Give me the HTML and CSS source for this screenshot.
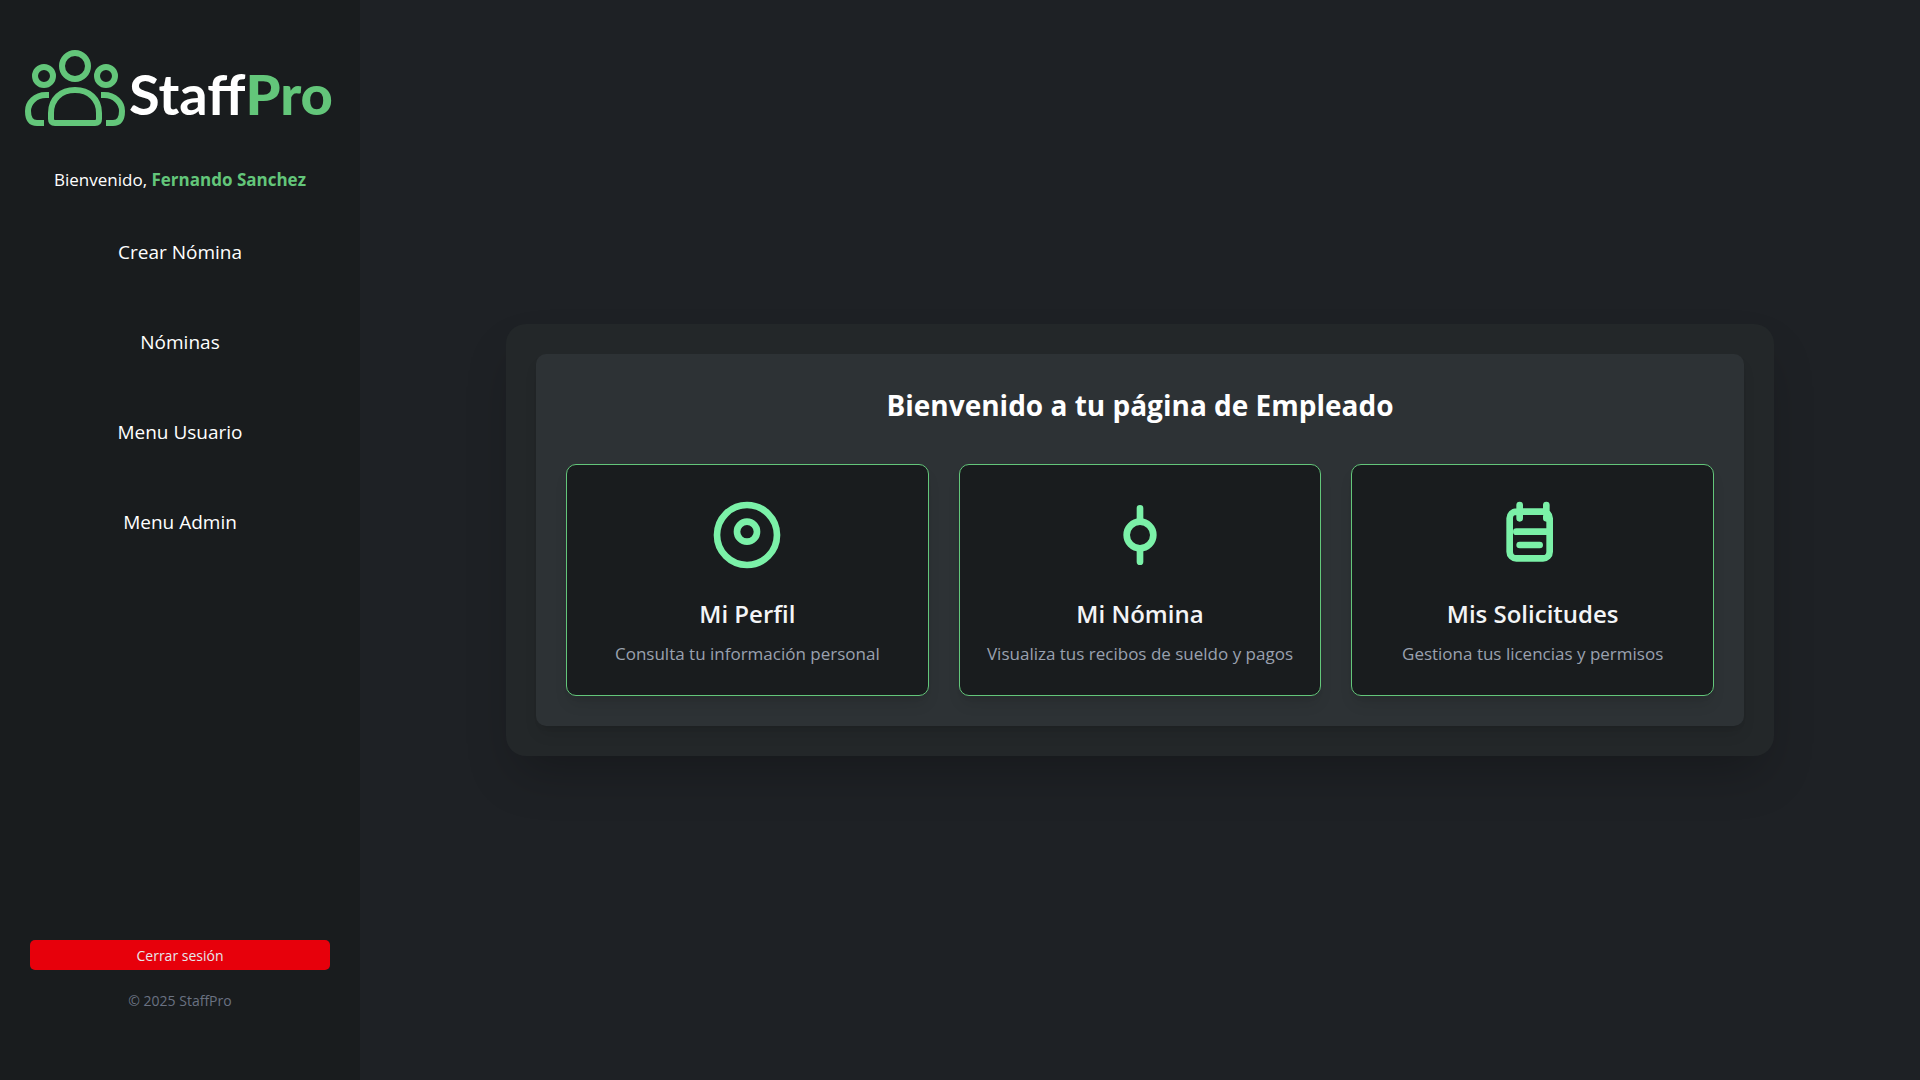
FILE: index.html
```html
<!DOCTYPE html>
<html lang="es">
<head>
<meta charset="utf-8">
<meta name="viewport" content="width=device-width, initial-scale=1">
<title>StaffPro</title>
<link rel="stylesheet" href="styles.css">
</head>
<body>
<div class="layout">
  <aside class="sidebar">
    <a class="logo" href="#">
      <svg class="logo-mark" viewBox="0 0 100 76" fill="none" stroke="currentColor" stroke-width="6" aria-hidden="true">
        <circle cx="50" cy="16" r="13"/>
        <circle cx="19" cy="26" r="9"/>
        <circle cx="81" cy="26" r="9"/>
        <path d="M26 67V63C26 49 36 40 50 40C64 40 74 49 74 63V69Q74 73 70 73H30Q26 73 26 69Z"/>
        <path d="M24 45H21C10 45 3 53 3 61C3 69 6 73 12 73H19"/>
        <path d="M76 45H79C90 45 97 53 97 61C97 69 94 73 88 73H81"/>
      </svg>
      <span class="logo-text">Staff<b>Pro</b></span>
    </a>
    <p class="welcome">Bienvenido, <strong>Fernando Sanchez</strong></p>
    <nav class="menu">
      <a href="#">Crear Nómina</a>
      <a href="#">Nóminas</a>
      <a href="#">Menu Usuario</a>
      <a href="#">Menu Admin</a>
    </nav>
    <footer class="sidebar-footer">
      <button class="logout" type="button">Cerrar sesión</button>
      <p class="copyright">© 2025 StaffPro</p>
    </footer>
  </aside>
  <main class="content">
    <div class="panel">
      <section class="board">
        <h1>Bienvenido a tu página de Empleado</h1>
        <div class="cards">
          <a class="card" href="#">
            <svg class="icon" viewBox="0 0 24 24" aria-hidden="true">
              <circle cx="12" cy="12" r="9"/>
              <circle cx="12" cy="11" r="3"/>
            </svg>
            <h2>Mi Perfil</h2>
            <p>Consulta tu información personal</p>
          </a>
          <a class="card" href="#">
            <svg class="icon" viewBox="0 0 24 24" aria-hidden="true">
              <circle cx="12" cy="12" r="4"/>
              <path d="M12 8V4M12 20V16"/>
            </svg>
            <h2>Mi Nómina</h2>
            <p>Visualiza tus recibos de sueldo y pagos</p>
          </a>
          <a class="card" href="#">
            <svg class="icon" viewBox="0 0 24 24" aria-hidden="true">
              <path d="M8 7V3M16 7V3M7 11H17M8 15H14M15 19H7a2 2 0 0 1-2-2V7a2 2 0 0 1 2-2h8a2 2 0 0 1 2 2v10a2 2 0 0 1-2 2z"/>
            </svg>
            <h2>Mis Solicitudes</h2>
            <p>Gestiona tus licencias y permisos</p>
          </a>
        </div>
      </section>
    </div>
  </main>
</div>
</body>
</html>
```
FILE: styles.css
```css
:root {
  --ink: #191c1e;
  --green: #63c67a;
  --mint: #7bf1a8;
}

* {
  box-sizing: border-box;
  margin: 0;
}

body {
  font-family: "Open Sans", "Noto Sans", sans-serif;
  font-size: 17px;
  line-height: 24px;
  color: #fff;
  background: #1e2125;
}

a {
  color: inherit;
  text-decoration: none;
}

.layout {
  display: flex;
  min-height: 100vh;
}

.sidebar {
  display: flex;
  flex-direction: column;
  flex: none;
  width: 360px;
  padding: 50px 25px 67px;
  text-align: center;
  background: var(--ink);
}

.logo {
  display: flex;
  align-items: flex-end;
  gap: 4px;
  height: 76px;
}

.logo-mark {
  flex: none;
  width: 100px;
  height: 76px;
  color: var(--green);
}

.logo-text {
  font-family: Lato, "Open Sans", sans-serif;
  font-size: 56px;
  font-weight: 700;
  line-height: 64px;
  white-space: nowrap;
}

.logo-text b {
  font-weight: 900;
  color: var(--green);
}

.welcome {
  margin-top: 42px;
}

.welcome strong {
  font-weight: 700;
  color: var(--green);
}

.menu {
  display: flex;
  flex-direction: column;
  gap: 30px;
  margin-top: 30px;
  font-size: 19px;
  font-weight: 500;
}

.menu a {
  padding: 18px 0;
}

.sidebar-footer {
  display: flex;
  flex-direction: column;
  gap: 19px;
  margin-top: auto;
  padding: 0 5px;
}

.logout {
  padding: 4px 0 2px;
  border: 0;
  border-radius: 5px;
  font: inherit;
  font-size: 14px;
  color: #e5e7eb;
  background: #e7000b;
}

.copyright {
  font-size: 14px;
  color: #6a7282;
}

.content {
  display: flex;
  flex: 1;
  align-items: center;
  justify-content: center;
  min-width: 0;
  padding: 30px;
}

.panel {
  width: 100%;
  max-width: 1268px;
  padding: 30px;
  border-radius: 20px;
  background: #232729;
  box-shadow: 0 25px 50px -12px rgba(0, 0, 0, 0.25);
}

.board {
  padding: 30px;
  border-radius: 10px;
  text-align: center;
  background: #2d3235;
  box-shadow: 0 10px 15px -3px rgba(0, 0, 0, 0.1), 0 4px 6px -4px rgba(0, 0, 0, 0.1);
}

h1 {
  margin-bottom: 38px;
  font-size: 28px;
  font-weight: 700;
  line-height: 42px;
}

.cards {
  display: grid;
  grid-template-columns: repeat(auto-fit, minmax(280px, 1fr));
  gap: 30px;
}

.card {
  display: flex;
  flex-direction: column;
  align-items: center;
  padding: 30px 20px 29px;
  border: 1px solid var(--green);
  border-radius: 10px;
  background: var(--ink);
  box-shadow: 0 10px 15px -3px rgba(0, 0, 0, 0.1), 0 4px 6px -4px rgba(0, 0, 0, 0.1);
}

.icon {
  width: 80px;
  height: 80px;
  fill: none;
  stroke: var(--mint);
  stroke-width: 2;
  stroke-linecap: round;
  stroke-linejoin: round;
}

.card h2 {
  margin: 20px 0 9px;
  font-size: 24px;
  font-weight: 600;
  line-height: 38px;
  color: #f3f4f6;
}

.card p {
  color: #99a1af;
}
```
